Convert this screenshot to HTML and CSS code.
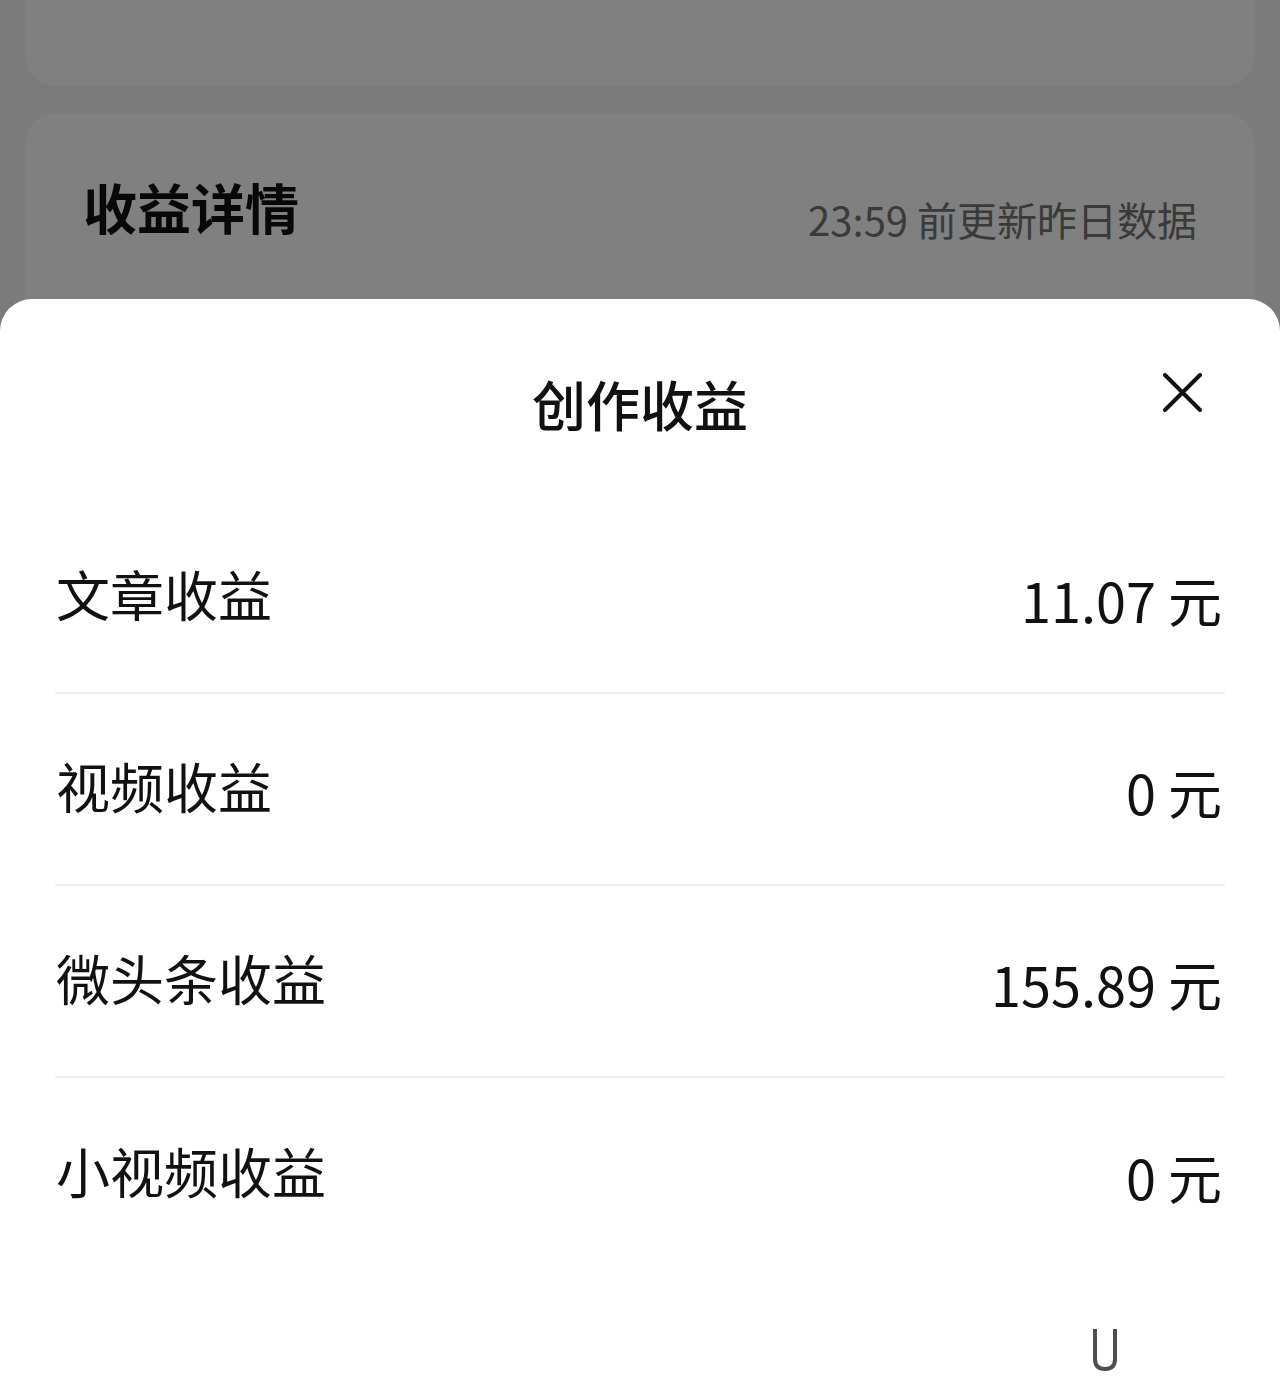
FILE: index.html
```html
<!DOCTYPE html>
<html lang="zh-CN">
<head>
    <meta charset="UTF-8">
    <meta name="viewport" content="width=device-width, initial-scale=1.0">
    <title>创作收益</title>
    <link rel="stylesheet" href="styles.css">
</head>
<body>
    <div class="page">
        <div class="card card-top"></div>
        <div class="card card-detail">
            <div class="detail-head">
                <h2 class="detail-title">收益详情</h2>
                <span class="detail-meta">23:59 前更新昨日数据</span>
            </div>
        </div>
    </div>

    <div class="sheet">
        <div class="sheet-head">
            <h1 class="sheet-title">创作收益</h1>
            <button class="close" aria-label="关闭">
                <svg width="39" height="39" viewBox="0 0 39 39">
                    <path d="M2 2 L37 37 M37 2 L2 37" stroke="#111" stroke-width="4" stroke-linecap="round" fill="none"/>
                </svg>
            </button>
        </div>
        <ul class="income-list">
            <li class="income-row">
                <span class="income-label">文章收益</span>
                <span class="income-value">11.07 元</span>
            </li>
            <li class="income-row">
                <span class="income-label">视频收益</span>
                <span class="income-value">0 元</span>
            </li>
            <li class="income-row">
                <span class="income-label">微头条收益</span>
                <span class="income-value">155.89 元</span>
            </li>
            <li class="income-row">
                <span class="income-label">小视频收益</span>
                <span class="income-value">0 元</span>
            </li>
        </ul>
        <svg class="watermark" width="26" height="42" viewBox="0 0 26 42">
            <path d="M3 0 V30 Q3 40 13 40 Q23 40 23 30 V0" stroke="#222" stroke-width="4" fill="none" opacity="0.8"/>
        </svg>
    </div>
</body>
</html>
```

FILE: styles.css
```css
* {
    box-sizing: border-box;
}

body {
    margin: 0;
    height: 1397px;
    overflow: hidden;
    background: #7b7b7b;
    font-family: "Noto Sans CJK SC", "Noto Sans", sans-serif;
    color: #111;
}

.page {
    padding: 0 25px;
}

.card {
    background: #808080;
    border-radius: 30px;
}

.card-top {
    height: 86px;
    border-radius: 0 0 30px 30px;
}

.card-detail {
    margin-top: 27px;
    height: 400px;
    padding: 64px 58px 0 58px;
}

.detail-head {
    display: flex;
    justify-content: space-between;
    align-items: flex-start;
}

.detail-title {
    margin: 0;
    font-size: 54px;
    line-height: 60px;
    font-weight: 700;
    color: #080808;
}

.detail-meta {
    margin-top: 17px;
    font-size: 40px;
    line-height: 50px;
    color: #3a3a3a;
}

.sheet {
    position: fixed;
    top: 299px;
    left: 0;
    right: 0;
    bottom: 0;
    background: #fff;
    border-radius: 32px 32px 0 0;
}

.sheet-head {
    display: grid;
    grid-template-columns: 1fr auto 1fr;
    padding: 75px 78px 68px;
}

.sheet-title {
    grid-column: 2;
    margin: 0;
    font-size: 54px;
    line-height: 60px;
    font-weight: 500;
}

.close {
    grid-column: 3;
    justify-self: end;
    align-self: start;
    margin-top: -1px;
    padding: 0;
    border: none;
    background: none;
    width: 39px;
    height: 39px;
}

.close svg {
    display: block;
}

.income-list {
    list-style: none;
    margin: 0 55px;
    padding: 0;
}

.income-row {
    display: flex;
    justify-content: space-between;
    align-items: center;
    height: 192px;
    padding: 0 3px 0 1px;
    border-bottom: 2px solid #efefef;
}

.income-row:last-child {
    border-bottom: none;
}

.income-label {
    font-size: 54px;
    line-height: 60px;
    margin-top: -6px;
}

.income-value {
    font-size: 54px;
    line-height: 60px;
    margin-top: 6px;
}

.watermark {
    position: absolute;
    left: 1092px;
    top: 1030px;
}
```
